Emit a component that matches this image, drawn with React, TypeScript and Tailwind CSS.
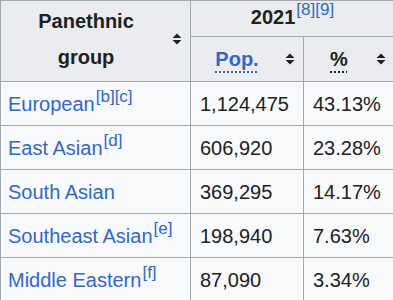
const rows = [
  { name: "European", refs: ["b", "c"], pop: "1,124,475", pct: "43.13%" },
  { name: "East Asian", refs: ["d"], pop: "606,920", pct: "23.28%" },
  { name: "South Asian", refs: [], pop: "369,295", pct: "14.17%" },
  { name: "Southeast Asian", refs: ["e"], pop: "198,940", pct: "7.63%" },
  { name: "Middle Eastern", refs: ["f"], pop: "87,090", pct: "3.34%" },
];

function SortIcon() {
  return (
    <svg width="10" height="12" viewBox="0 0 10 12" className="shrink-0">
      <path d="M5 0.5 L9.5 5 L0.5 5 Z" fill="#202122" />
      <path d="M0.5 7 L9.5 7 L5 11.5 Z" fill="#202122" />
    </svg>
  );
}

function Refs({ refs }: { refs: string[] }) {
  return (
    <sup className="text-[17px] font-normal text-[#3366cc] relative -top-[9px] ml-px">
      {refs.map((r) => `[${r}]`).join("")}
    </sup>
  );
}

export default function App() {
  return (
    <div className="w-[393px] h-[300px] overflow-hidden bg-white">
      <table
        className="w-[394px] border-collapse text-[20px] text-[#202122] table-fixed"
        style={{ fontFamily: '"Liberation Sans", Arial, sans-serif' }}
      >
        <colgroup>
          <col className="w-[190px]" />
          <col className="w-[113px]" />
          <col className="w-[91px]" />
        </colgroup>
        <thead>
          <tr className="h-[36px]">
            <th rowSpan={2} className="bg-[#eaecf0] border border-[#a2a9b1] p-0 font-bold">
              <div className="flex items-center pr-[8px] pb-[5px]">
                <span className="flex-1 text-center leading-[36px] pl-[2px] pr-[3px]">
                  Panethnic
                  <br />
                  group
                </span>
                <SortIcon />
              </div>
            </th>
            <th colSpan={2} className="bg-[#eaecf0] border border-[#a2a9b1] p-0 pb-[3px] font-bold text-center">
              2021<Refs refs={["8", "9"]} />
            </th>
          </tr>
          <tr className="h-[45px]">
            <th className="bg-[#eaecf0] border border-[#a2a9b1] p-0 font-bold">
              <div className="flex items-center pr-[8px]">
                <span className="flex-1 text-center pl-[2px] pr-[4px]">
                  <span className="text-[#3366cc] underline decoration-dotted decoration-2 underline-offset-[5px]">
                    Pop.
                  </span>
                </span>
                <SortIcon />
              </div>
            </th>
            <th className="bg-[#eaecf0] border border-[#a2a9b1] p-0 font-bold">
              <div className="flex items-center pr-[8px]">
                <span className="flex-1 text-center pl-[2px] pr-[4px]">
                  <span className="underline decoration-dotted decoration-2 underline-offset-[5px]">%</span>
                </span>
                <SortIcon />
              </div>
            </th>
          </tr>
        </thead>
        <tbody>
          {rows.map((r) => (
            <tr key={r.name} className="h-[44px]">
              <td className="bg-[#f8f9fa] border border-[#a2a9b1] px-[7px] py-0">
                <span className="text-[#3366cc]">{r.name}</span>
                {r.refs.length > 0 && <Refs refs={r.refs} />}
              </td>
              <td className="bg-[#f8f9fa] border border-[#a2a9b1] px-[9px] py-0">{r.pop}</td>
              <td className="bg-[#f8f9fa] border border-[#a2a9b1] px-[9px] py-0">{r.pct}</td>
            </tr>
          ))}
        </tbody>
      </table>
    </div>
  );
}
